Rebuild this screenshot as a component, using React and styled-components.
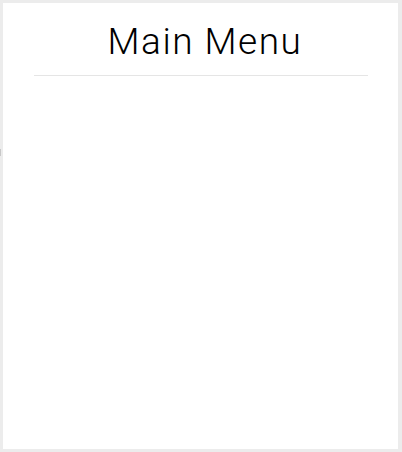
import React from 'react';
import styled, { createGlobalStyle } from 'styled-components';

const GlobalStyle = createGlobalStyle`
    html, body {
        margin: 0;
        padding: 0;
        background-color: #ececec;
    }
`;

const Frame = styled.div`
    position: relative;
    box-sizing: border-box;
    width: 402px;
    height: 452px;
    padding: 3px 4px 3px 3px;
`;

const Panel = styled.div`
    box-sizing: border-box;
    height: 100%;
    background-color: #ffffff;
    padding: 0 30px 0 31px;
`;

const Title = styled.h1`
    margin: 0;
    padding: 20px 0 14px 8px;
    text-align: center;
    font-family: Roboto, sans-serif;
    font-weight: 300;
    font-size: 37px;
    line-height: 38px;
    letter-spacing: 1.5px;
    color: #000000;
    border-bottom: 1px solid #e5e5e5;
`;

const Handle = styled.div`
    position: absolute;
    left: 0;
    top: 149px;
    width: 1px;
    height: 7px;
    background-color: #c8c8c8;
`;

const App = () => {
    return (
        <>
            <GlobalStyle />
            <Frame>
                <Handle />
                <Panel>
                    <Title>Main Menu</Title>
                </Panel>
            </Frame>
        </>
    );
};

export default App;
